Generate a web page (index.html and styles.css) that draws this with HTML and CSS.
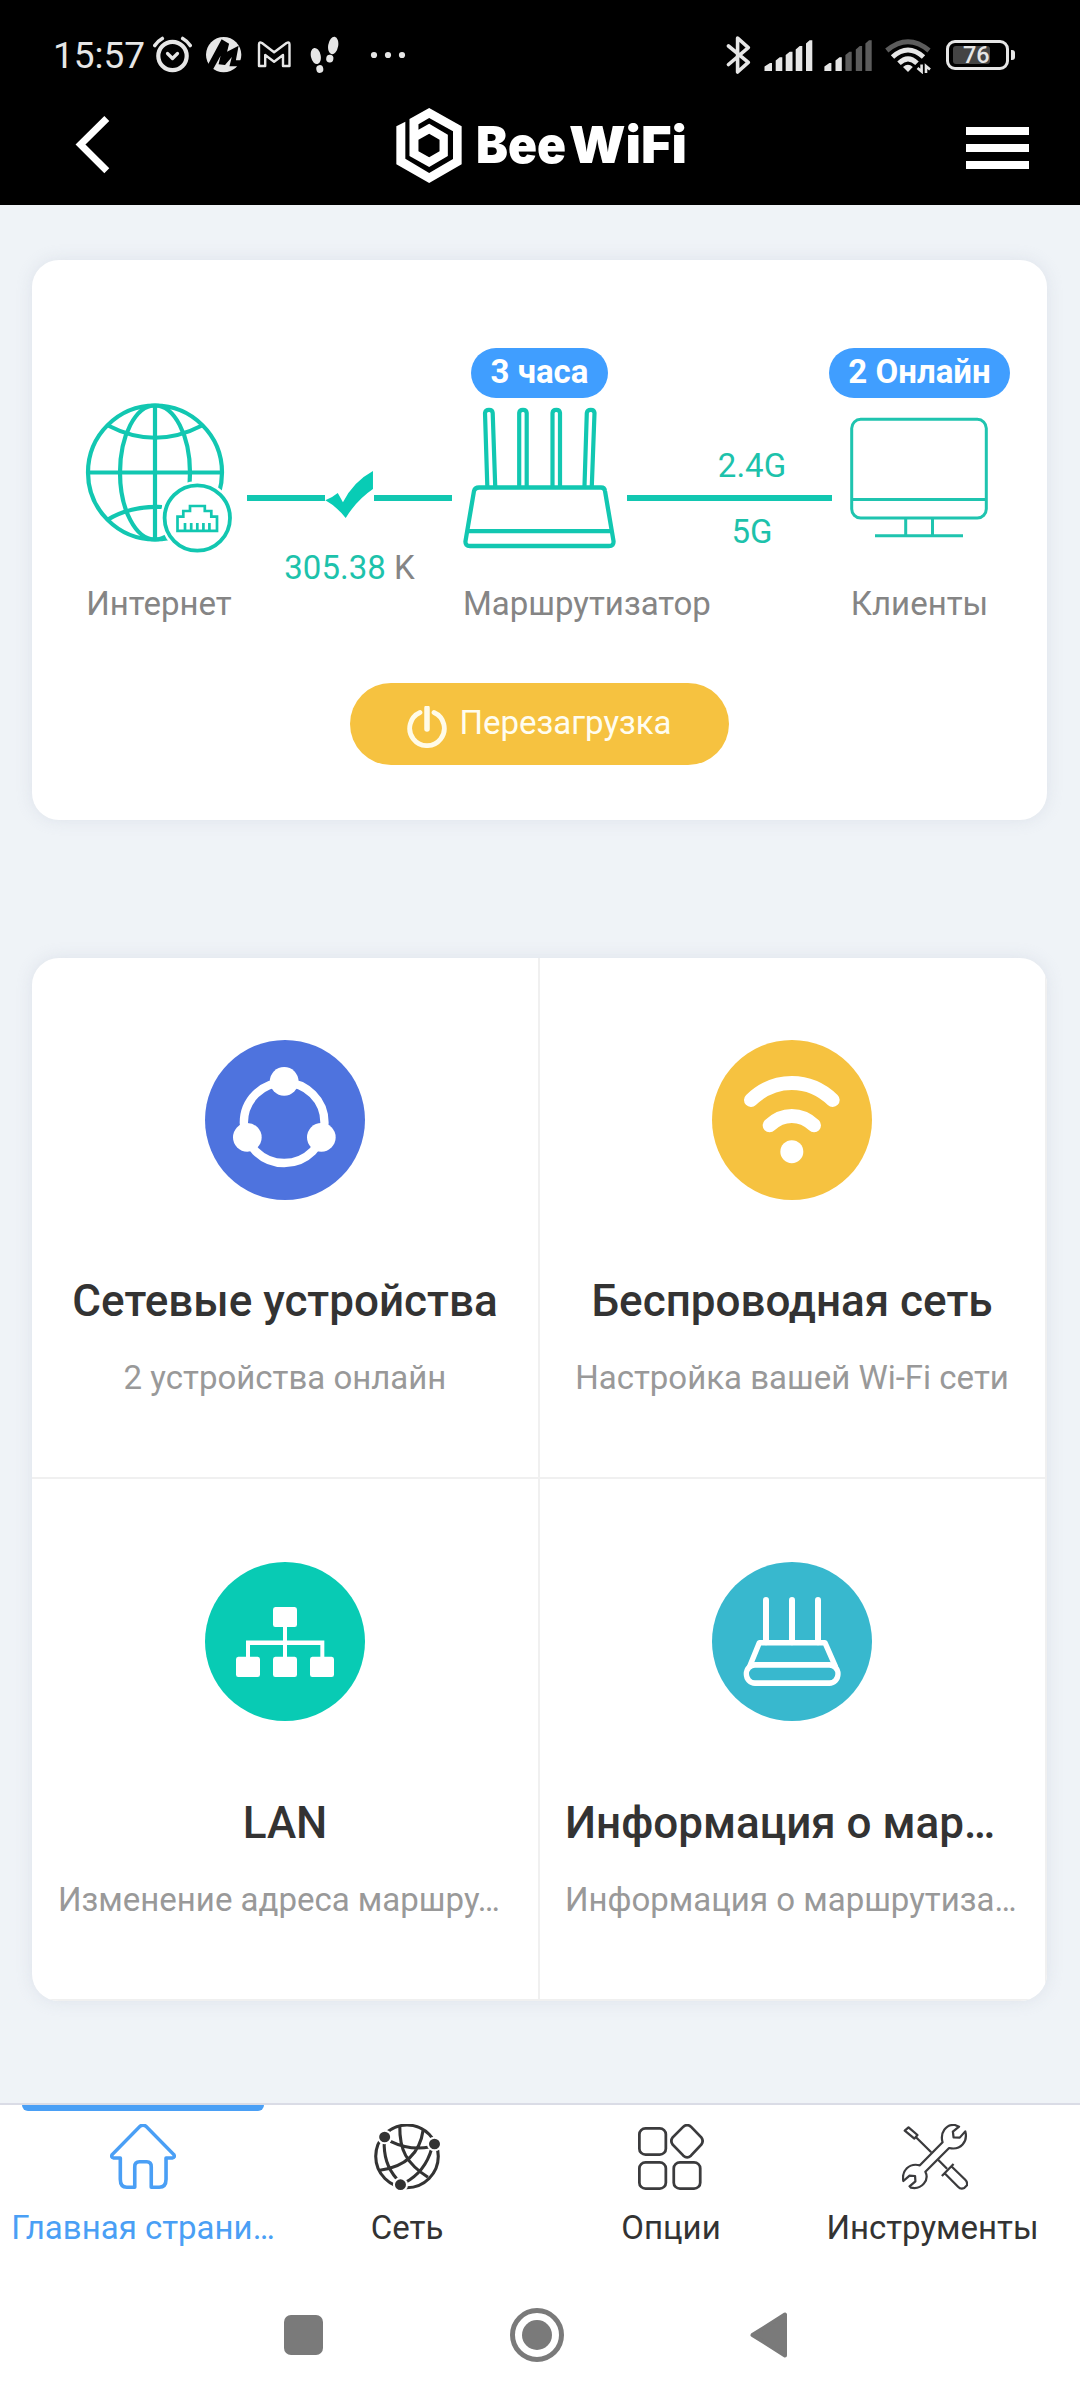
FILE: index.html
```html
<!DOCTYPE html>
<html lang="ru">
<head>
<meta charset="utf-8">
<title>BeeWiFi</title>
<link rel="stylesheet" href="styles.css">
</head>
<body>
<header class="top">
  <div class="status">
    <span class="clock">15:57</span>
    <svg class="s-alarm" width="40" height="38" viewBox="153 36 40 38" fill="none" stroke="#e6e6e6" stroke-linecap="round" stroke-linejoin="round">
      <circle cx="172.5" cy="56" r="14.2" stroke-width="4.2"/>
      <path d="M167.5 53.5l5 5 5-5" stroke-width="3.2"/>
      <path d="M154.8 45.5q3-4.500 7.500-7M190.200 45.500q-3-4.500-7.500-7" stroke-width="3.600"/>
    </svg>
    <svg class="s-m" width="36" height="38" viewBox="48 19 106 114" preserveAspectRatio="none">
      <ellipse cx="100" cy="75" rx="52" ry="53" fill="#e6e6e6"/>
      <path d="M50 112L94 29 116 42 110 66 144 48 136 92H158L142 110 117 110 124 82 104 106 85 104 91 78 66 124Z" fill="#000"/>
    </svg>
    <svg class="s-gmail" width="35" height="38" viewBox="257 36 35 38" fill="none" stroke="#e6e6e6" stroke-width="2.400" stroke-linejoin="round">
      <path d="M259 66V44.500Q259 41.500 262 43L274.100 52.300 286.500 43Q289.500 41.500 289.500 44.500V66H283V55L274.100 61.700 265.200 55V66Z"/>
    </svg>
    <svg class="s-steps" width="30" height="38" viewBox="310 36 30 38" fill="#e6e6e6">
      <ellipse cx="315.800" cy="56" rx="4.900" ry="8.200" transform="rotate(-12 315.800 56)"/>
      <ellipse cx="319.800" cy="69" rx="3.500" ry="3.900" transform="rotate(-12 319.800 69)"/>
      <ellipse cx="333.200" cy="45.500" rx="5" ry="8.800" transform="rotate(10 333.200 45.500)"/>
      <ellipse cx="329.800" cy="58.600" rx="3.600" ry="3.900" transform="rotate(10 329.800 58.600)"/>
    </svg>
    <svg class="s-dots" width="36" height="38" viewBox="370 36 36 38" fill="#e6e6e6">
      <circle cx="374" cy="55" r="3.100"/><circle cx="388" cy="55" r="3.100"/><circle cx="402" cy="55" r="3.100"/>
    </svg>
    <svg class="s-bt" width="26" height="38" viewBox="726 36 26 38" fill="none" stroke="#e6e6e6" stroke-width="3.600" stroke-linejoin="round" stroke-linecap="round">
      <path d="M728.500 46L748.300 62.300 737.600 72V38L748.300 47.600 728.500 64.500"/>
    </svg>
    <svg class="s-sig" width="49" height="38" viewBox="763.500 36 49 38" fill="#e6e6e6">
      <path d="M764 71v-4.500l5.500-3.500h2v8zM775.200 71V60.500l4-3.200h2.600V71zM785.200 71V55l4-3.200h2.800V71zM795.200 71V49.500l4-3.500h2.600V71zM805.500 71V43.500l3.600-3.200h2.700V71z"/>
    </svg>
    <svg class="s-sig2" width="49" height="38" viewBox="824 36 49 38" fill="#5c5c5c">
      <path fill="#e6e6e6" d="M824.400 71v-4.500l5-3.500h2v8zM835.500 71V60.500l4-3.200h2.300V71z"/>
      <path d="M845.400 71V55l4-3.200h2.300V71zM855.800 71V49.500l4-3.500h2.300V71zM865.400 71V43.500l3.600-3.200h2.700V71z"/>
    </svg>
    <svg class="s-wifi" width="48" height="38" viewBox="884 36 48 38" fill="none">
      <path d="M886.800 50.500Q908 33 929 50.500" stroke="#5c5c5c" stroke-width="5"/>
      <path d="M892.500 57Q908 43 923.500 57M899 63.200Q908 54.500 917 63.200" stroke="#e6e6e6" stroke-width="5"/>
      <path d="M903 67Q908 62.500 912.800 67L908 72Z" fill="#e6e6e6"/>
      <path d="M921.600 64.500V71.500L917.500 68M926 73V66l4 3.500" stroke="#e6e6e6" stroke-width="2.600"/>
    </svg>
    <div class="battery"><div class="battery-level"></div><span class="battery-text">76</span></div>
    <i class="battery-nub"></i>
  </div>
  <div class="appbar">
    <svg class="back" width="35" height="60" viewBox="75 115 35 60" fill="none" stroke="#fff" stroke-width="7"><path d="M106.800 118.500L80.500 144.600 106.800 170.800"/></svg>
    <div class="brand">
      <svg width="66" height="75" viewBox="1149 321 191 225" preserveAspectRatio="none" fill="#fff" fill-rule="evenodd">
        <path d="M1150 376L1176 362V473L1245 516 1314 474V391L1245 351 1214 370V386L1245 368 1299 401V465L1245 498 1188 465V354L1245 321 1339 376V490L1245 546 1150 490ZM1245 398L1275 416V451L1245 469 1214 451V416Z"/>
      </svg>
      <svg class="wordmark" width="210" height="50" viewBox="0 0 210 50" fill="#fff">
        <text x="-2" y="43" textLength="90" lengthAdjust="spacingAndGlyphs">Bee</text>
        <text x="91" y="43" textLength="118" lengthAdjust="spacingAndGlyphs">WiFi</text>
      </svg>
    </div>
    <div class="menu"><i></i><i></i><i></i></div>
  </div>
</header>

<main class="content">
  <section class="card overview">
    <div class="topology">
      <div class="node internet">
        <div class="slot"></div>
        <div class="art">
          <svg width="148" height="155" viewBox="85 398 148 155" fill="none" stroke="#12c7b1" stroke-width="4.200">
            <circle cx="155" cy="472.500" r="67"/>
            <path d="M155 405V540M88 472.500H222"/>
            <ellipse cx="155" cy="472.500" rx="35" ry="67"/>
            <path d="M108 425.500Q155 450 202 425.500M108 519.500Q130 506 162 507"/>
            <circle cx="197.300" cy="518" r="37" fill="#fff" stroke="none"/>
            <circle cx="197.300" cy="518" r="32.700" stroke-width="3.800"/>
            <path stroke-width="2.700" d="M177.500 530.800V516.700H183.300V511H190V506H204.800V511H211.300V516.700H217V530.800ZM185 523v7M191.200 523v7M197.300 523v7M203.400 523v7M209.400 523v7"/>
          </svg>
        </div>
        <div class="label">Интернет</div>
      </div>
      <div class="link uplink">
        <div class="link-row">
          <i></i>
          <svg width="49" height="47" viewBox="918 423 142 141" preserveAspectRatio="none"><path fill="#08ccb5" d="M919 511Q940 502 955 489L970 517Q1000 455 1057 423V477Q1010 510 978 564 952 530 919 511Z"/></svg>
          <i></i>
        </div>
        <div class="rate"><b>305.38</b> K</div>
      </div>
      <div class="node router">
        <div class="slot"><span class="badge">3 часа</span></div>
        <div class="art">
          <svg width="153" height="155" viewBox="463 398 153 155" fill="none" stroke="#12c7b1" stroke-width="4.300" stroke-linejoin="round">
            <path d="M479 487.500H601Q604.500 487.500 605 491L613.500 541Q614 546 609 546H470Q465 546 465.500 541L474 491Q475 487.500 479 487.500ZM468 531.200H611"/>
            <g stroke-width="4.200"><path d="M487.300 486L485 413Q485.500 409.800 489 409.800T492.700 413L495.200 486"/>
            <path d="M519.200 486V413Q519.500 409.800 523 409.800T526.700 413V486M552.500 486V413Q552.800 409.800 556.300 409.800T560 413V486"/>
            <path d="M584.500 486L586.800 413Q587.300 409.800 590.800 409.800T594.500 413L591.800 486"/></g>
          </svg>
        </div>
        <div class="label">Маршрутизатор</div>
      </div>
      <div class="link downlink">
        <div class="rate band">2.4G</div>
        <div class="wire"></div>
        <div class="rate band">5G</div>
      </div>
      <div class="node clients">
        <div class="slot"><span class="badge">2 Онлайн</span></div>
        <div class="art">
          <svg width="138" height="155" viewBox="850 398 138 155" fill="none" stroke="#1fc4af" stroke-width="3">
            <rect x="851.700" y="419.300" width="134.600" height="98.700" rx="9"/>
            <path d="M852 499.400H986M905.700 518V535M932.500 518V535M875 535.800H963"/>
          </svg>
        </div>
        <div class="label">Клиенты</div>
      </div>
    </div>
    <div class="reboot">
      <svg width="40" height="42" viewBox="0 0 40 42" fill="none" stroke="#fffbe8" stroke-linecap="round">
        <path d="M13 6.500A17.300 17.300 0 1 0 27 6.500" stroke-width="4.800"/><path d="M20 2V23" stroke-width="5.500"/>
      </svg>
      <span>Перезагрузка</span>
    </div>
  </section>

  <section class="card tiles">
    <div class="tile">
      <svg width="160" height="160" viewBox="555 300 480 480">
        <circle cx="795" cy="540" r="240" fill="#4e73de"/>
        <circle cx="792.500" cy="548" r="121" fill="none" stroke="#fff" stroke-width="25"/>
        <g fill="#fff"><circle cx="792.500" cy="424" r="43"/><circle cx="682" cy="592" r="43"/><circle cx="904" cy="592" r="43"/></g>
      </svg>
      <h2>Сетевые устройства</h2>
      <p>2 устройства онлайн</p>
    </div>
    <div class="tile">
      <svg width="160" height="160" viewBox="516 300 480 480">
        <circle cx="756" cy="540" r="240" fill="#f6c240"/>
        <path d="M633 480Q686 429 755.500 429T878 480M689 556Q718 528 755.500 528T822 556" fill="none" stroke="#fff" stroke-width="42" stroke-linecap="round"/>
        <circle cx="755.500" cy="635" r="34.500" fill="#fff"/>
      </svg>
      <h2>Беспроводная сеть</h2>
      <p>Настройка вашей Wi-Fi сети</p>
    </div>
    <div class="tile">
      <svg width="160" height="159" viewBox="555 286 480 445" preserveAspectRatio="none">
        <ellipse cx="795" cy="508.500" rx="240" ry="222.500" fill="#08cbb4"/>
        <path d="M795 460V560M684 560V512H907V560" fill="none" stroke="#fff" stroke-width="12"/>
        <g fill="#fff"><rect x="759" y="412" width="72" height="56" rx="7"/><rect x="648" y="551" width="72" height="57" rx="7"/><rect x="759" y="551" width="72" height="57" rx="7"/><rect x="870" y="551" width="72" height="57" rx="7"/></g>
      </svg>
      <h2>LAN</h2>
      <p class="clipped">Изменение адреса маршру…</p>
    </div>
    <div class="tile">
      <svg width="160" height="159" viewBox="516 286 480 445" preserveAspectRatio="none">
        <ellipse cx="756" cy="508.500" rx="240" ry="222.500" fill="#38b8ce"/>
        <g fill="none" stroke="#fff" stroke-width="16" stroke-linejoin="round" stroke-linecap="round">
          <path d="M678 393V510M756 393V510M834 393V510" stroke-width="18"/>
          <path d="M629 578L658 512H855L886 578"/>
          <rect x="619" y="574" width="275" height="51" rx="26"/>
        </g>
      </svg>
      <h2 class="clipped">Информация о мар…</h2>
      <p class="clipped">Информация о маршрутиза…</p>
    </div>
  </section>
</main>

<nav class="tabs">
  <div class="tab active">
    <svg width="66" height="66" viewBox="319 132 192 198" preserveAspectRatio="none" fill="none" stroke="#4a9ff5" stroke-width="10.500" stroke-linejoin="round">
      <path d="M349 234H330Q320 232 326 223L406 139Q415 132 424 139L504 223Q510 232 500 234H482V298Q482 322 462 322H439V260Q439 245 426 245H405Q391 245 391 260V322H368Q349 322 349 298Z"/>
    </svg>
    <span>Главная страни…</span>
  </div>
  <div class="tab">
    <svg width="66" height="66" viewBox="1086 132 192 198" preserveAspectRatio="none" fill="none" stroke="#333" stroke-width="9">
      <ellipse cx="1182" cy="229" rx="91" ry="94"/>
      <path d="M1134 184Q1190 212 1248 201M1161 138C1160 210 1180 250 1243 292M1229 150C1220 215 1180 260 1103 271M1116 180Q1112 250 1152 296M1254 205Q1235 275 1176 308"/>
      <g fill="#333" stroke="#fff" stroke-width="6"><circle cx="1117" cy="171" r="19"/><circle cx="1262" cy="192" r="19"/><circle cx="1163" cy="314" r="19"/></g>
    </svg>
    <span>Сеть</span>
  </div>
  <div class="tab">
    <svg width="66" height="66" viewBox="287 132 192 198" preserveAspectRatio="none" fill="none" stroke="#3b3b3d" stroke-width="8">
      <rect x="291" y="145" width="77" height="79" rx="18"/><rect x="291" y="247" width="77" height="79" rx="18"/><rect x="391" y="247" width="77" height="79" rx="18"/>
      <path d="M419 140Q430 131 441 140L471 172Q479 183 471 194L441 227Q430 237 419 227L388 194Q380 183 388 172Z"/>
    </svg>
    <span>Опции</span>
  </div>
  <div class="tab">
    <svg width="66" height="66" viewBox="1054 132 192 198" preserveAspectRatio="none" fill="none" stroke="#3b3b3d" stroke-width="6.500" stroke-linejoin="round">
      <path d="M1106 256L1172 187C1164 158 1182 132 1208 135L1220 140 1202 155 1204 172 1222 173 1238 154C1246 185 1225 212 1191 204L1122 275C1134 300 1112 330 1080 323L1076 319 1093 304 1092 288 1076 287 1058 303C1052 272 1075 248 1106 256Z"/>
      <path d="M1062 152L1073 142 1099 165 1090 176ZM1094 171L1139 217M1159 239L1185 266M1170 288L1204 252M1178 280L1217 320Q1225 329 1235 324L1243 316Q1245 306 1238 299L1199 260"/>
    </svg>
    <span class="tools-label">Инструменты</span>
  </div>
</nav>

<footer class="sysnav">
  <svg width="39" height="40" viewBox="0 0 39 40" fill="#7a7a7a"><rect width="39" height="40" rx="7"/></svg>
  <svg width="54" height="54" viewBox="0 0 54 54"><circle cx="27" cy="27" r="24.500" fill="none" stroke="#7a7a7a" stroke-width="5"/><circle cx="27" cy="27" r="15" fill="#7a7a7a"/></svg>
  <svg width="37" height="46" viewBox="0 0 37 46" fill="#7a7a7a" stroke="#7a7a7a" stroke-width="4" stroke-linejoin="round"><path d="M2.500 23L35 2.500V43.500Z"/></svg>
</footer>
</body>
</html>
```

FILE: styles.css
```css
* { box-sizing: border-box; }

body {
  margin: 0;
  width: 1080px;
  height: 2400px;
  overflow: hidden;
  display: flex;
  flex-direction: column;
  background: #eff3f7;
  font-family: Roboto, "Noto Sans", sans-serif;
  font-size: 33px;
  line-height: 40px;
}

svg { display: block; flex: none; }

/* header */
.top { height: 205px; flex: none; background: #000; }

.status {
  height: 100px;
  padding: 10px 0 0 53px;
  display: flex;
  align-items: center;
  color: #e6e6e6;
}
.clock { width: 100px; padding-top: 2px; font-size: 37px; white-space: nowrap; }
.s-m { margin-left: 13px; }
.s-gmail { margin-left: 15px; }
.s-steps { margin-left: 18px; }
.s-dots { margin-left: 30px; }
.s-bt { margin-left: 320px; }
.s-sig { margin-left: 11.5px; }
.s-sig2 { margin-left: 11.5px; }
.s-wifi { margin-left: 11px; }

.battery {
  width: 63px;
  height: 30px;
  margin-left: 14px;
  border: 3px solid #e6e6e6;
  border-radius: 9px;
  padding: 3px 4px;
  display: flex;
  position: relative;
}
.battery-level { width: 37px; background: #444; border-radius: 3px; }
.battery-text {
  position: absolute;
  left: 14px;
  top: 0;
  font-size: 23.5px;
  font-weight: 500;
  line-height: 25px;
}
.battery-nub { width: 4px; height: 10px; margin-left: 2px; background: #e6e6e6; border-radius: 0 3px 3px 0; }

.appbar {
  height: 90px;
  padding: 0 51px 0 75px;
  display: flex;
  align-items: center;
  justify-content: space-between;
}
.back { margin-right: 286px; }
.brand { display: flex; align-items: center; gap: 16px; margin-right: auto; }
.wordmark { overflow: visible; }
.wordmark text { font-family: Inter, sans-serif; font-weight: 900; font-size: 51px; }
.menu { display: flex; flex-direction: column; gap: 9.5px; width: 63px; padding-top: 6px; }
.menu i { height: 7.5px; background: #fff; }

/* cards */
.content { height: 1898px; padding: 55px 33px 0 32px; flex: none; }
.card { background: #fff; border-radius: 27px; box-shadow: 0 0 16px rgba(200, 206, 220, 0.45); }

.overview { height: 560px; padding-top: 88px; }
.topology { display: flex; height: 276px; padding-left: 53px; }
.node { display: flex; flex-direction: column; align-items: center; flex: none; }
.internet { width: 148px; }
.router { width: 153px; margin-left: 11px; }
.clients { width: 138px; margin-left: 18px; }
.slot { height: 50px; display: flex; justify-content: center; }
.badge {
  height: 50px;
  padding: 0 19.5px;
  border-radius: 25px;
  background: #409eff;
  color: #fff;
  font-weight: 700;
  line-height: 47px;
  white-space: nowrap;
}
.clients .badge { margin-left: 1px; }
.label { margin-top: 31px; color: #858585; white-space: nowrap; }
.router .label { align-self: flex-start; }
.clients .label { padding-left: 1px; }

.link { width: 205px; flex: none; display: flex; flex-direction: column; }
.uplink { margin-left: 14px; padding-top: 123px; align-items: center; }
.link-row { display: flex; align-items: center; align-self: stretch; }
.link-row i { flex: 1; height: 6px; margin-top: 7px; background: #12c7b1; }
.rate { margin-top: 30px; color: #858585; white-space: nowrap; }
.rate b { color: #1dc2ab; font-weight: 400; }
.downlink { margin-left: 11px; padding-top: 98px; }
.band { margin: 0; padding-left: 45px; text-align: center; color: #1dc2ab; }
.wire { height: 6px; margin: 9px 0 11px; background: #12c7b1; }

.reboot {
  width: 379px;
  height: 82px;
  margin: 59px auto 0;
  border-radius: 41px;
  background: #f6c240;
  color: #fffdf0;
  display: flex;
  align-items: center;
  justify-content: center;
  gap: 12px;
}
.reboot svg { margin-top: 5px; }
.reboot span { margin-top: -2px; }

.tiles {
  margin-top: 138px;
  height: 1043px;
  display: grid;
  grid-template-columns: 508px 507px;
  grid-template-rows: 521px 522px;
  overflow: hidden;
}
.tile {
  min-width: 0;
  padding: 82px 26px 0;
  border-right: 2px solid #f0f0f0;
  border-bottom: 2px solid #f0f0f0;
  display: flex;
  flex-direction: column;
  align-items: center;
}
.tile:nth-child(even) { padding: 82px 26px 0 25px; }
.tile:nth-child(n+3) { padding-top: 83px; }
.tile h2,
.tile p {
  margin: 0;
  white-space: nowrap;
}
.tile h2 { margin-top: 74px; font-size: 44px; line-height: 54px; font-weight: 500; color: #333; }
.tile:nth-child(n+3) h2 { margin-top: 75px; }
.tile p { margin-top: 30px; color: #999; }
.tile .clipped { align-self: flex-start; }

/* bottom tabs */
.tabs {
  height: 165px;
  flex: none;
  background: #fff;
  border-top: 2px solid #dadce6;
  padding: 0 13px 0 11px;
  display: grid;
  grid-template-columns: repeat(4, 264px);
}
.tab {
  min-width: 0;
  position: relative;
  padding-top: 19px;
  display: flex;
  flex-direction: column;
  align-items: center;
  color: #333;
}
.tab span { margin-top: 18px; white-space: nowrap; }
.tab .tools-label { margin-right: 5px; }
.tab.active { color: #4a9ff5; }
.tab.active::before {
  content: "";
  position: absolute;
  top: 0;
  left: 11px;
  width: 242px;
  height: 6px;
  background: #4a9ff5;
  border-radius: 0 0 6px 6px;
}

/* system navigation */
.sysnav {
  flex: 1;
  background: #fff;
  padding: 2px 293px 0 284px;
  display: flex;
  align-items: center;
  justify-content: space-between;
}
```
